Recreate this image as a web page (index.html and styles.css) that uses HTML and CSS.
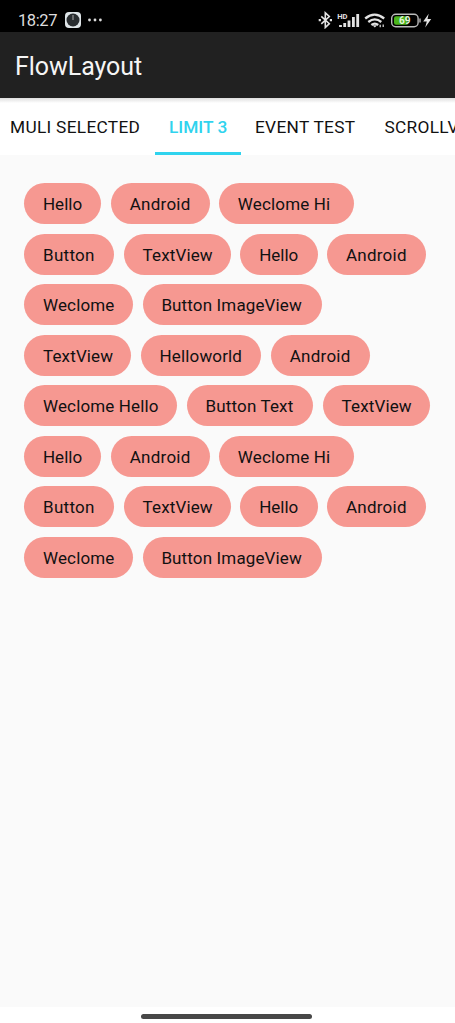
FILE: index.html
```html
<!DOCTYPE html>
<html lang="en">
<head>
<meta charset="utf-8">
<title>FlowLayout</title>
<link rel="stylesheet" href="styles.css">
</head>
<body>
<div class="status">
  <span class="time">18:27</span>
  <svg class="clock" width="16" height="16" viewBox="0 0 16 16"><rect width="16" height="16" rx="4" fill="#dfe5e8"/><circle cx="8" cy="8" r="6.5" fill="#292d30"/><path d="M8 3v5" stroke="#aaa" stroke-width="1"/></svg>
  <svg class="dots" width="14" height="4" viewBox="0 0 14 4" fill="#ddd"><circle cx="1.5" cy="2" r="1.4"/><circle cx="7" cy="2" r="1.4"/><circle cx="12.4" cy="2" r="1.4"/></svg>
  <svg class="system" width="115" height="18" viewBox="0 0 115 18" fill="none" stroke="#e2e2e2">
    <path d="M3.3 5.4l8 7.3-4 3.8V1.8l4 3.7-8 7.3" stroke-width="1.6"/>
    <path d="M.7 9.2h2.2M11.8 9.2H14" stroke-width="2.2"/>
    <text class="hd" x="19.2" y="7.6">HD</text>
    <path d="M22.5 16v-2M26.7 16v-4M31 16v-6.5M35.4 16V6M39.7 16V3" stroke-width="2.8"/>
    <path d="M47.2 7.5q9.3-7.8 19 0M50.3 11q6.5-5.2 13 0M53.4 14q3.5-2.8 6.8 0" stroke-width="2.3"/>
    <path d="M56.8 16.6l-2.3-2.4h4.6z" fill="#e2e2e2" stroke="none"/>
    <path d="M62.2 16.3v-2.5M65.2 13.5v2.5" stroke-width="1.2"/>
    <rect x="73.7" y="3.2" width="26.4" height="12.6" rx="4" stroke="#bbb" stroke-width="1.4"/>
    <path d="M78 5.3h11.5v8.4H78q-2 0-2-2V7.3q0-2 2-2" fill="#4bb51c" stroke="none"/>
    <text class="charge" x="81" y="13.2">69</text>
    <path d="M102 7.5v4" stroke="#bbb" stroke-width="1.4"/>
    <path d="M110.7 2.8L105.2 10.6h3.6l-1.6 5.8 6-8.3h-3.7z" fill="#e2e2e2" stroke="none"/>
  </svg>
</div>
<header class="appbar"><h1>FlowLayout</h1></header>
<nav class="tabs">
  <a class="tab t-muli"><span>MULI SELECTED</span></a>
  <a class="tab t-limit active"><span>LIMIT 3</span></a>
  <a class="tab t-event"><span>EVENT TEST</span></a>
  <a class="tab t-scroll"><span>SCROLLVIEW</span></a>
</nav>
<main class="flow">
  <div class="row"><span class="chip hello">Hello</span><span class="chip android">Android</span><span class="chip weclome-hi">Weclome Hi</span></div>
  <div class="row"><span class="chip button">Button</span><span class="chip textview">TextView</span><span class="chip hello">Hello</span><span class="chip android">Android</span></div>
  <div class="row"><span class="chip weclome">Weclome</span><span class="chip button-image">Button ImageView</span></div>
  <div class="row"><span class="chip textview">TextView</span><span class="chip helloworld">Helloworld</span><span class="chip android">Android</span></div>
  <div class="row"><span class="chip weclome-hello">Weclome Hello</span><span class="chip button-text">Button Text</span><span class="chip textview">TextView</span></div>
  <div class="row"><span class="chip hello">Hello</span><span class="chip android">Android</span><span class="chip weclome-hi">Weclome Hi</span></div>
  <div class="row"><span class="chip button">Button</span><span class="chip textview">TextView</span><span class="chip hello">Hello</span><span class="chip android">Android</span></div>
  <div class="row"><span class="chip weclome">Weclome</span><span class="chip button-image">Button ImageView</span></div>
</main>
<footer class="gesture"><div class="handle"></div></footer>
</body>
</html>
```
FILE: styles.css
```css
* { box-sizing: border-box; }
body {
  margin: 0;
  height: 1023px;
  display: flex;
  flex-direction: column;
  overflow: hidden;
  background: #fafafa;
  font-family: Roboto, sans-serif;
  color: #111;
}
.status {
  height: 32px;
  flex: none;
  display: flex;
  align-items: center;
  padding: 8px 22px 0 18px;
  background: #000;
}
.time { width: 40px; margin-right: 7px; padding-top: 2px; font-size: 16.5px; line-height: 24px; letter-spacing: -.4px; color: #ddd; white-space: nowrap; }
.clock { margin-right: 7px; }
.system { margin-left: auto; }
.hd { font: 700 7.6px Roboto, sans-serif; fill: #e2e2e2; stroke: none; }
.charge { font: 700 10px Roboto, sans-serif; fill: #e4f4dc; stroke: none; }
.appbar {
  height: 66px;
  flex: none;
  display: flex;
  align-items: center;
  padding: 3px 0 0 15px;
  background: #212121;
}
h1 { margin: 0; font-size: 25px; font-weight: 400; line-height: 30px; color: #f5f5f5; letter-spacing: -.05px; }
.tabs {
  height: 57px;
  flex: none;
  display: flex;
  overflow: hidden;
  background: linear-gradient(#dedede, #fff 5px);
}
.tab {
  flex: none;
  display: flex;
  align-items: center;
  padding: 4px 0 0 14px;
  border-bottom: 3px solid transparent;
  font-size: 17.3px;
  letter-spacing: .3px;
  white-space: nowrap;
}
.t-muli { width: 155px; padding-left: 10px; }
.t-limit { width: 86px; letter-spacing: 0; }
.t-event { width: 129.5px; }
.active { color: #2fd3ee; border-color: #2fd3ee; font-weight: 500; }
.flow {
  flex: 1;
  display: flex;
  flex-direction: column;
  gap: 9.55px;
  padding: 28px 0 0 24.3px;
}
.row { display: flex; gap: 9.6px; }
.chip {
  height: 41px;
  flex: none;
  padding-left: 18.7px;
  border-radius: 21px;
  background: #f69891;
  font-size: 17px;
  line-height: 42.4px;
  letter-spacing: .14px;
  white-space: nowrap;
}
.hello { width: 77.2px; letter-spacing: 0; }
.android { width: 98.5px; letter-spacing: .25px; }
.weclome-hi { width: 134.6px; }
.button { width: 90px; letter-spacing: .3px; }
.textview { width: 107px; }
.weclome { width: 108.8px; }
.button-image { width: 179.2px; }
.helloworld { width: 120.6px; }
.weclome-hello { width: 153px; }
.button-text { width: 126.4px; }
.gesture {
  height: 16px;
  flex: none;
  display: flex;
  justify-content: center;
  padding: 7px 3px 0 0;
  background: #fff;
}
.handle { width: 171px; height: 5px; border-radius: 3px; background: #484848; }
```
